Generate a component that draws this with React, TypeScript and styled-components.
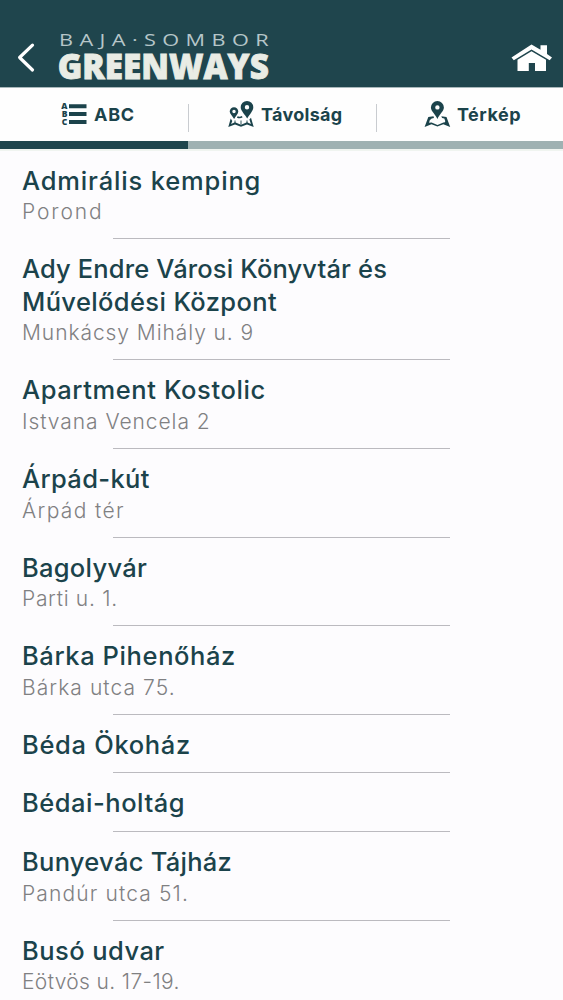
import React from "react";
import styled, { createGlobalStyle } from "styled-components";

const DARK = "#1f454d";
const INK = "#1b434b";

const GlobalStyle = createGlobalStyle`
  * {
    box-sizing: border-box;
  }

  body {
    margin: 0;
    background: #fdfcfe;
    font-family: Inter, "Open Sans", sans-serif;
  }
`;

const Screen = styled.div`
  height: 1000px;
  overflow: hidden;
`;

const Header = styled.header`
  display: flex;
  align-items: flex-start;
  height: 88px;
  padding: 30px 10px 0 16px;
  background: ${DARK};
  border-bottom: 1px solid #a9b8bb;
`;

const BackButton = styled.button`
  display: flex;
  width: 22px;
  margin-top: 12px;
  padding: 0;
  border: 0;
  background: none;
`;

const Logo = styled.svg`
  display: block;
  margin-left: 17px;
  overflow: visible;
  font-family: "Open Sans", "Noto Sans", sans-serif;
`;

const HomeLink = styled.a`
  display: flex;
  margin: 14px 0 0 auto;
`;

const Tabs = styled.nav`
  display: grid;
  grid-template-columns: 188px 188px 187px;
  height: 53px;
  background: #fefefe;
`;

const Tab = styled.div<{ $offset: number; $divided?: boolean }>`
  display: flex;
  align-items: flex-start;
  padding: 12px 0 0 ${(props) => props.$offset}px;
  background: ${(props) =>
    props.$divided
      ? "linear-gradient(#c9ccd0, #c9ccd0) 0 16px / 1px 28px no-repeat"
      : "none"};
  color: ${INK};
`;

const TabLabel = styled.span<{ $gap: number; $tracking: number }>`
  margin-left: ${(props) => props.$gap}px;
  font-size: 18px;
  font-weight: 700;
  line-height: 30px;
  letter-spacing: ${(props) => props.$tracking}px;
  white-space: nowrap;
`;

const TabTrack = styled.div`
  height: 10px;
  padding-bottom: 2px;
  background: #f0f4f0;
`;

const TabBar = styled.div`
  height: 8px;
  background: linear-gradient(to right, ${DARK} 188px, #9fb1b2 188px);
`;

const PlaceList = styled.ul`
  margin: 0;
  padding: 13.6px 0 0;
  list-style: none;
`;

const PlaceItem = styled.li`
  padding: 0 113px 0 22px;
  margin-bottom: 14px;

  &::after {
    content: "";
    display: block;
    width: 337px;
    margin: 11.2px 0 0 91px;
    border-bottom: 1px solid #bbbabf;
  }
`;

const PlaceName = styled.div<{ $tracking: number }>`
  color: ${INK};
  font-size: 25.5px;
  font-weight: 480;
  line-height: 32.6px;
  letter-spacing: ${(props) => props.$tracking}px;
  white-space: nowrap;
`;

const PlaceAddress = styled.div<{ $tracking: number }>`
  color: #808082;
  font-size: 21px;
  font-weight: 300;
  line-height: 29.8px;
  letter-spacing: ${(props) => props.$tracking}px;
  white-space: nowrap;
`;

type Line = [text: string, tracking: number];

interface IPlace {
  name: Line[];
  address?: Line;
}

const places: IPlace[] = [
  { name: [["Admirális kemping", 0.84]], address: ["Porond", 1.9] },
  {
    name: [
      ["Ady Endre Városi Könyvtár és", 0.14],
      ["Művelődési Központ", 0.38],
    ],
    address: ["Munkácsy Mihály u. 9", 0.93],
  },
  { name: [["Apartment Kostolic", 0.6]], address: ["Istvana Vencela 2", 0.94] },
  { name: [["Árpád-kút", 0.35]], address: ["Árpád tér", 1.37] },
  { name: [["Bagolyvár", 0.28]], address: ["Parti u. 1.", 0.7] },
  { name: [["Bárka Pihenőház", 0.6]], address: ["Bárka utca 75.", 1.07] },
  { name: [["Béda Ökoház", 0.68]] },
  { name: [["Bédai-holtág", 0.52]] },
  { name: [["Bunyevác Tájház", 0.28]], address: ["Pandúr utca 51.", 1.13] },
  { name: [["Busó udvar", 0.45]], address: ["Eötvös u. 17-19.", 0.35] },
];

const ListIcon = () => (
  <svg width="27" height="27" viewBox="0 0 27 27" fill="currentColor">
    <g fontFamily="Open Sans, sans-serif" fontSize="8.5" fontWeight="800">
      <text x="0.3" y="9.2">A</text>
      <text x="0.8" y="17">B</text>
      <text x="0.8" y="25">C</text>
    </g>
    <path d="M8 4.200h17.500v4H8zM8 12h17.500v4H8zM8 20h17.500v4H8z" />
  </svg>
);

const DistanceIcon = () => (
  <svg width="26" height="28" viewBox="0 0 26 28" fill="currentColor">
    <path
      fillRule="evenodd"
      d="M19 1a6.300 6.300 0 0 1 6.300 6.300C25.300 11 21.500 14.500 19.200 18.500 17 14.500 12.700 11 12.700 7.300A6.300 6.300 0 0 1 19 1zm0 4a2.200 2.200 0 1 0 0 4.400 2.200 2.200 0 0 0 0-4.400z"
    />
    <path
      fillRule="evenodd"
      d="M6 7.200a4.300 4.300 0 0 1 4.300 4.300c0 2.400-2.700 4.500-4.200 7.500-1.500-3-4.400-5.100-4.400-7.500A4.300 4.300 0 0 1 6 7.200zm0 2.600a1.700 1.700 0 1 0 0 3.400 1.700 1.700 0 0 0 0-3.400z"
    />
    <path d="M2.700 18.500 4.300 21l-1.200 3L7 22.200l6 2.600 6-2.600 3.900 1.800-1.500-4.500 1.600-1.700 2.700 9.200-6.700-2.600-6 2.400-6-2.400L.3 27z" />
    <path
      fill="none"
      stroke="currentColor"
      strokeWidth="1.600"
      d="M9.300 17q2.700 1.200 4.900-.3"
    />
    <path
      fill="none"
      stroke="currentColor"
      strokeWidth="0.900"
      d="M7 20.500v3M13 20.500v4M19 20.500v3"
    />
  </svg>
);

const MapIcon = () => (
  <svg width="27" height="28" viewBox="0 0 27 28" fill="currentColor">
    <path
      fillRule="evenodd"
      d="M13.400 1a6.500 6.500 0 0 1 6.500 6.500c0 3.700-4.500 6.800-6.500 11.500-2-4.700-6.500-7.800-6.500-11.500A6.500 6.500 0 0 1 13.400 1zm0 4.200a2.200 2.200 0 1 0 0 4.400 2.200 2.200 0 0 0 0-4.400z"
    />
    <path d="M9.500 16.200 4.300 17 .6 27l6.900-2.700 5.900 2.300 5.900-2.300 6.900 2.700-3.700-10-5.200-.8.800 1.900 2.200.4q1.200 2.200.7 3.800l-1.600.3-5.900 2.300-5.900-2.300-2.500.2q0-2.700 2.600-4.300l2.300-.4z" />
  </svg>
);

export default function App() {
  return (
    <>
      <GlobalStyle />
      <Screen>
        <Header>
          <BackButton aria-label="Vissza">
            <svg width="22" height="32" viewBox="0 0 22 32" fill="none">
              <path
                d="M16.500 3.200 3.600 15.500l12.900 12.500"
                stroke="#fff"
                strokeWidth="3.200"
                strokeLinecap="round"
                strokeLinejoin="round"
              />
            </svg>
          </BackButton>
          <Logo width="218" height="54" viewBox="0 0 218 54">
            <text
              x="4"
              y="16.300"
              fontSize="17"
              letterSpacing="5"
              fill="#b6c6c9"
              textLength="216"
              lengthAdjust="spacingAndGlyphs"
            >
              BAJA·SOMBOR
            </text>
            <text
              x="2.800"
              y="49.300"
              fontSize="36"
              fontWeight="800"
              fill="#e9ece5"
              stroke="#e9ece5"
              strokeWidth="0.900"
              textLength="211"
              lengthAdjust="spacingAndGlyphs"
            >
              GREENWAYS
            </text>
          </Logo>
          <HomeLink href="#" aria-label="Kezdőlap">
            <svg width="42" height="28" viewBox="0 0 42 28" fill="#fff">
              <path d="M20.500.500.500 13.500l2.300 2.800L20.500 5.500l18.200 10.800 2.300-2.800-5-3.600V1.200h-6.500v4.600z" />
              <path d="M20.500 7.200 6.500 15.700V27h11.300v-8h6.200v8H35V15.700z" />
            </svg>
          </HomeLink>
        </Header>

        <Tabs>
          <Tab $offset={61}>
            <ListIcon />
            <TabLabel $gap={6} $tracking={0.7}>ABC</TabLabel>
          </Tab>
          <Tab $offset={40} $divided>
            <DistanceIcon />
            <TabLabel $gap={7} $tracking={0.3}>Távolság</TabLabel>
          </Tab>
          <Tab $offset={48} $divided>
            <MapIcon />
            <TabLabel $gap={6} $tracking={0.5}>Térkép</TabLabel>
          </Tab>
        </Tabs>
        <TabTrack>
          <TabBar />
        </TabTrack>

        <PlaceList>
          {places.map(({ name, address }) => (
            <PlaceItem key={name[0][0]}>
              {name.map(([text, tracking]) => (
                <PlaceName key={text} $tracking={tracking}>{text}</PlaceName>
              ))}
              {address && (
                <PlaceAddress $tracking={address[1]}>{address[0]}</PlaceAddress>
              )}
            </PlaceItem>
          ))}
        </PlaceList>
      </Screen>
    </>
  );
}
